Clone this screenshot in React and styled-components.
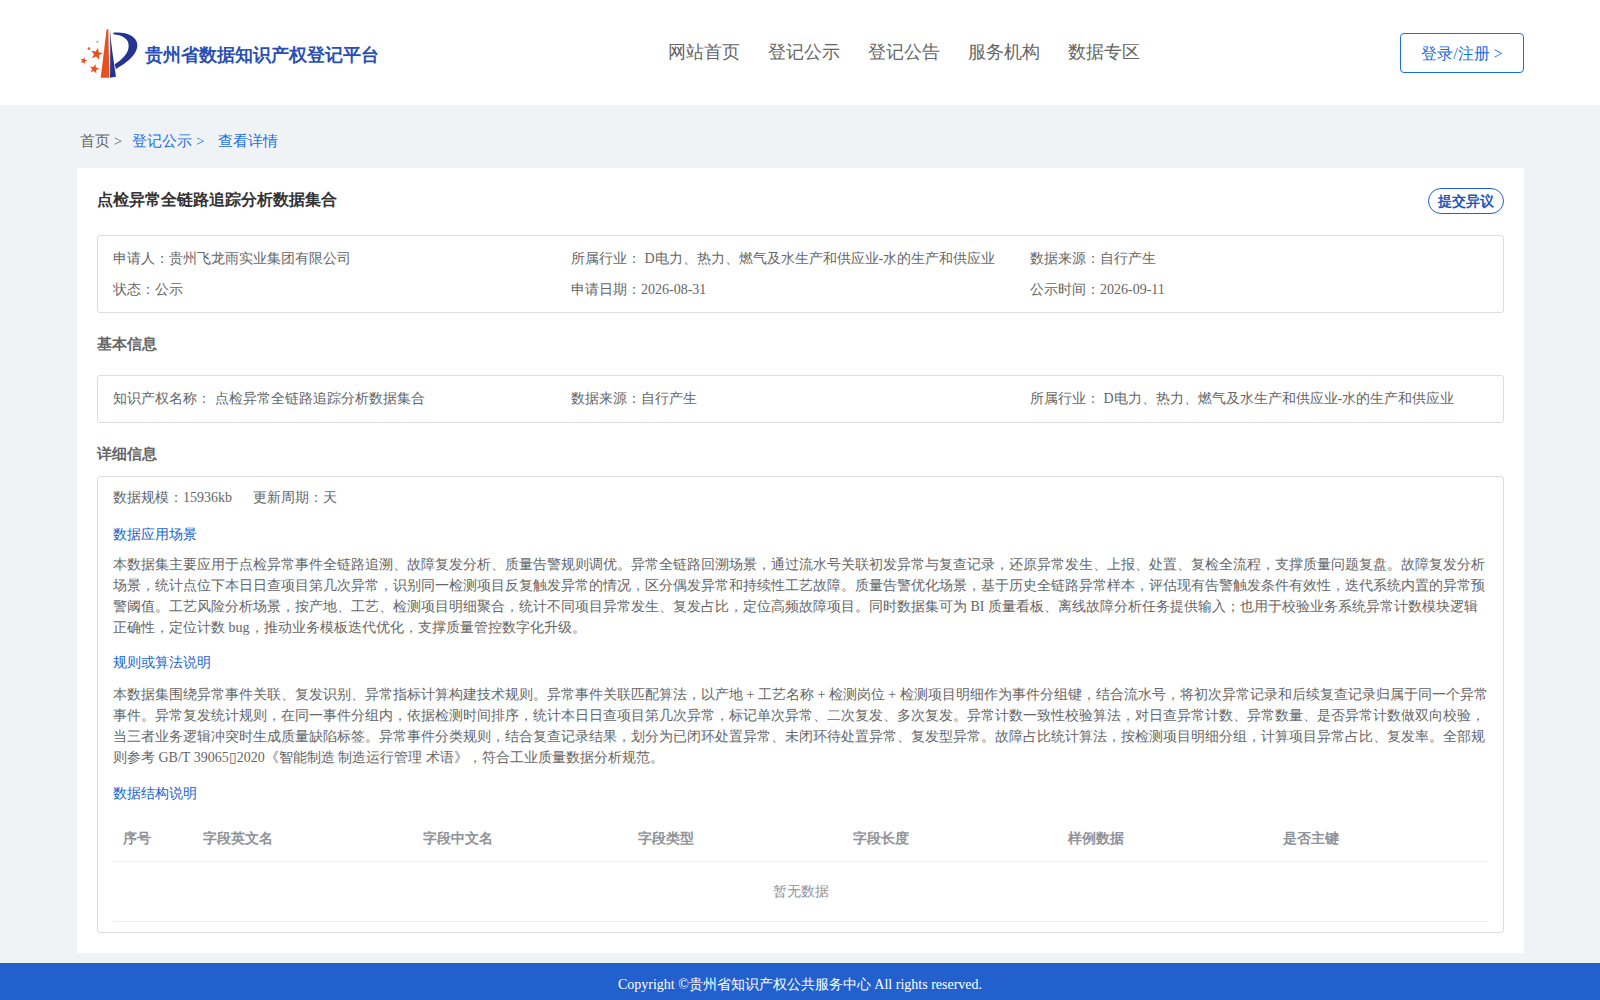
import React from 'react';
import styled, { createGlobalStyle } from 'styled-components';

const Global = createGlobalStyle`
  * { box-sizing: border-box; }
  html, body { margin: 0; padding: 0; }
  body {
    background: #eff3f6;
    font-family: "Liberation Serif", serif;
    color: #666;
    font-size: 14px;
  }
`;

const Header = styled.header`
  height: 105px;
  background: #fff;
  padding: 0 76px 0 80px;
  display: flex;
  align-items: center;
`;
const Brand = styled.div`
  display: flex;
  align-items: center;
  width: 588px;
`;
const BrandName = styled.span`
  font-size: 18px;
  font-weight: 700;
  color: #2a4fb4;
  padding-top: 4px;
`;
const Nav = styled.nav`
  display: flex;
  gap: 28px;
  flex: 1;
  margin-top: -2px;
`;
const NavItem = styled.a`
  font-size: 18px;
  line-height: 24px;
  color: #666;
`;
const Login = styled.button`
  width: 124px;
  height: 40px;
  padding: 4px 0 0;
  background: #fff;
  border: 1px solid #1a6fe0;
  border-radius: 4px;
  color: #1a6fe0;
  font: inherit;
  font-size: 16px;
`;
const Crumbs = styled.div`
  height: 63px;
  padding: 10px 0 0 80px;
  display: flex;
  align-items: center;
  font-size: 15px;
`;
const Crumb = styled.span`
  color: ${p => (p.$active ? '#1a6fe0' : '#666')};
  margin-right: ${p => p.$gap || 0}px;
`;
const Card = styled.main`
  background: #fff;
  margin: 0 76px 10px 77px;
  padding: 20px 20px 20px;
`;
const TitleRow = styled.div`
  display: flex;
  justify-content: space-between;
  align-items: flex-start;
  height: 47px;
`;
const Title = styled.h1`
  margin: 0;
  font-size: 16px;
  line-height: 24px;
  font-weight: 700;
  color: #333;
`;
const Objection = styled.button`
  width: 76px;
  height: 26px;
  padding: 2px 0 0;
  background: #fff;
  border: 1px solid #2060cf;
  border-radius: 13px;
  font: inherit;
  font-size: 14px;
  font-weight: 700;
  color: #2256b8;
`;
const Box = styled.section`
  border: 1px solid #ddd;
  border-radius: 3px;
  padding: ${p => p.$pad || '0 15px'};
`;
const InfoGrid = styled.div`
  display: grid;
  grid-template-columns: 458px 459px 1fr;
  row-gap: 1px;
  align-items: center;
`;
const InfoCell = styled.div`
  line-height: 30px;
  height: 30px;
  white-space: nowrap;
`;
const SectionTitle = styled.h2`
  margin: 0;
  font-size: 15px;
  font-weight: 700;
  color: #666;
  line-height: 22px;
  padding: ${p => p.$pad};
`;
const MetaRow = styled.div`
  display: flex;
  gap: 21px;
  line-height: 20px;
`;
const Subhead = styled.div`
  color: #1a63d0;
  line-height: 22px;
  margin-top: ${p => p.$top}px;
`;
const Para = styled.p`
  margin: ${p => p.$top ?? 8}px 0 0;
  line-height: 21px;
`;
const Table = styled.table`
  width: 100%;
  table-layout: fixed;
  border-collapse: collapse;
  margin-top: 11px;
`;
const Th = styled.th`
  text-align: left;
  height: 45px;
  padding: 2px 10px 0;
  color: #909399;
  font-weight: 700;
  font-size: 14px;
  border-bottom: 1px solid #ebeef5;
  width: ${p => p.$w}px;
`;
const Empty = styled.td`
  height: 60px;
  padding: 2px 0 0;
  text-align: center;
  color: #909399;
  border-bottom: 1px solid #ebeef5;
`;
const Footer = styled.footer`
  background: #2260ce;
  color: #fff;
  text-align: center;
  height: 42px;
  line-height: 44px;
`;

const starPoints = (cx, cy, r, rot) => {
  const pts = [];
  for (let i = 0; i < 10; i++) {
    const a = (rot + i * 36 - 90) * Math.PI / 180;
    const d = i % 2 ? r * 0.42 : r;
    pts.push(`${(cx + d * Math.cos(a)).toFixed(1)},${(cy + d * Math.sin(a)).toFixed(1)}`);
  }
  return pts.join(' ');
};

const Logo = () => (
  <svg width="70" height="60" viewBox="0 0 210 180" aria-hidden="true" style={{ display: 'block', marginLeft: '-5px' }}>
    <path d="M95 19 L100 19 L103 164 L77 164 Z" fill="#e8501f" />
    <path d="M105 19 C106 70 106 120 105 164 L123 161 C116 112 108 66 105 19 Z" fill="#26338f" />
    <path d="M115 29 C150 25 187 38 187 66 C187 98 150 122 123 138 L119 124 C140 110 161 92 161 68 C161 46 140 36 115 34 Z" fill="#26338f" />
    <polygon points={starPoints(65, 93, 19, 12)} fill="#e8501f" />
    <polygon points={starPoints(58, 138, 15, 12)} fill="#e8501f" />
    <polygon points={starPoints(26, 113, 11, 12)} fill="#e8501f" />
    <circle cx="42" cy="77" r="4" fill="#e8622f" />
    <circle cx="67" cy="56" r="3" fill="#ec8a60" />
  </svg>
);

const cols = [['序号', 80], ['字段英文名', 220], ['字段中文名', 215], ['字段类型', 215], ['字段长度', 215], ['样例数据', 215], ['是否主键', 215]];
const navs = ['网站首页', '登记公示', '登记公告', '服务机构', '数据专区'];

export default function App() {
  return (
    <>
      <Global />
      <Header>
        <Brand>
          <Logo />
          <BrandName>贵州省数据知识产权登记平台</BrandName>
        </Brand>
        <Nav>{navs.map(n => <NavItem key={n}>{n}</NavItem>)}</Nav>
        <Login>登录/注册 &gt;</Login>
      </Header>
      <Crumbs>
        <Crumb $gap={10}>首页 &gt;</Crumb>
        <Crumb $active $gap={14}>登记公示 &gt;</Crumb>
        <Crumb $active>查看详情</Crumb>
      </Crumbs>
      <Card>
        <TitleRow>
          <Title>点检异常全链路追踪分析数据集合</Title>
          <Objection>提交异议</Objection>
        </TitleRow>
        <Box $pad="8px 15px 7px">
          <InfoGrid>
            <InfoCell>申请人：贵州飞龙雨实业集团有限公司</InfoCell>
            <InfoCell>所属行业： D电力、热力、燃气及水生产和供应业-水的生产和供应业</InfoCell>
            <InfoCell>数据来源：自行产生</InfoCell>
            <InfoCell>状态：公示</InfoCell>
            <InfoCell>申请日期：2026-08-31</InfoCell>
            <InfoCell>公示时间：2026-09-11</InfoCell>
          </InfoGrid>
        </Box>
        <SectionTitle $pad="20px 0 20px">基本信息</SectionTitle>
        <Box $pad="8px 15px">
          <InfoGrid>
            <InfoCell>知识产权名称： 点检异常全链路追踪分析数据集合</InfoCell>
            <InfoCell>数据来源：自行产生</InfoCell>
            <InfoCell>所属行业： D电力、热力、燃气及水生产和供应业-水的生产和供应业</InfoCell>
          </InfoGrid>
        </Box>
        <SectionTitle $pad="20px 0 11px">详细信息</SectionTitle>
        <Box $pad="11px 15px 10px">
          <MetaRow>
            <span>数据规模：15936kb</span>
            <span>更新周期：天</span>
          </MetaRow>
          <Subhead $top={16}>数据应用场景</Subhead>
          <Para>本数据集主要应用于点检异常事件全链路追溯、故障复发分析、质量告警规则调优。异常全链路回溯场景，通过流水号关联初发异常与复查记录，还原异常发生、上报、处置、复检全流程，支撑质量问题复盘。故障复发分析场景，统计点位下本日日查项目第几次异常，识别同一检测项目反复触发异常的情况，区分偶发异常和持续性工艺故障。质量告警优化场景，基于历史全链路异常样本，评估现有告警触发条件有效性，迭代系统内置的异常预警阈值。工艺风险分析场景，按产地、工艺、检测项目明细聚合，统计不同项目异常发生、复发占比，定位高频故障项目。同时数据集可为 BI 质量看板、离线故障分析任务提供输入；也用于校验业务系统异常计数模块逻辑正确性，定位计数 bug，推动业务模板迭代优化，支撑质量管控数字化升级。</Para>
          <Subhead $top={14}>规则或算法说明</Subhead>
          <Para $top={10}>本数据集围绕异常事件关联、复发识别、异常指标计算构建技术规则。异常事件关联匹配算法，以产地 + 工艺名称 + 检测岗位 + 检测项目明细作为事件分组键，结合流水号，将初次异常记录和后续复查记录归属于同一个异常事件。异常复发统计规则，在同一事件分组内，依据检测时间排序，统计本日日查项目第几次异常，标记单次异常、二次复发、多次复发。异常计数一致性校验算法，对日查异常计数、异常数量、是否异常计数做双向校验，当三者业务逻辑冲突时生成质量缺陷标签。异常事件分类规则，结合复查记录结果，划分为已闭环处置异常、未闭环待处置异常、复发型异常。故障占比统计算法，按检测项目明细分组，计算项目异常占比、复发率。全部规则参考 GB/T 39065{'\u25AF'}2020《智能制造 制造运行管理 术语》，符合工业质量数据分析规范。</Para>
          <Subhead $top={15}>数据结构说明</Subhead>
          <Table>
            <thead>
              <tr>{cols.map(([t, w]) => <Th key={t} $w={w}>{t}</Th>)}</tr>
            </thead>
            <tbody>
              <tr><Empty colSpan={7}>暂无数据</Empty></tr>
            </tbody>
          </Table>
        </Box>
      </Card>
      <Footer>Copyright ©贵州省知识产权公共服务中心 All rights reserved.</Footer>
    </>
  );
}
